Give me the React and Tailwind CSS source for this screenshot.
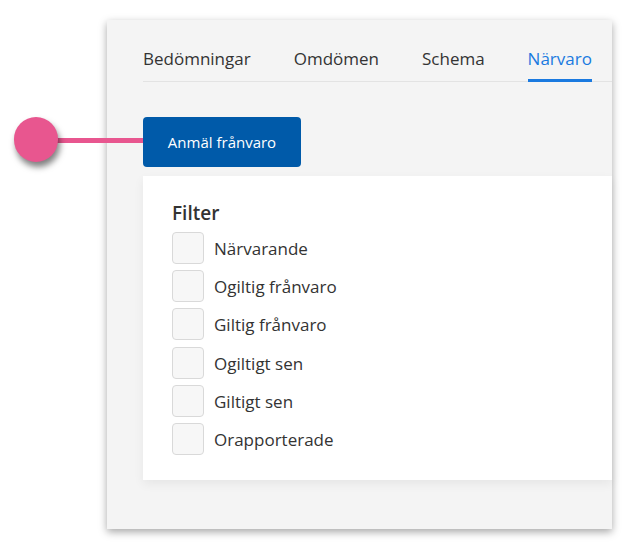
import React from "react";

const filters = [
  "Närvarande",
  "Ogiltig frånvaro",
  "Giltig frånvaro",
  "Ogiltigt sen",
  "Giltigt sen",
  "Orapporterade",
];

const tabs = ["Bedömningar", "Omdömen", "Schema", "Närvaro"];

export default function App() {
  return (
    <div
      className="relative w-[633px] h-[546px] bg-white overflow-hidden"
      style={{ fontFamily: '"Open Sans", "Noto Sans", sans-serif' }}
    >
      <div className="ml-[107px] mt-[20px] w-[505px] h-[509px] bg-[#f4f4f4] shadow-[0_3px_8px_rgba(0,0,0,0.35)] pl-[36px] pt-[27px] flex flex-col">
        <div className="flex gap-[43px] border-b border-[#e3e3e3]">
          {tabs.map((t, i) => (
            <div
              key={t}
              className={
                i === 3
                  ? "text-[17px] leading-[24px] pb-[8px] -mb-px border-b-[3px] border-[#1a7ae0] text-[#1a7ae0]"
                  : "text-[17px] leading-[24px] pb-[8px] text-[#333333]"
              }
            >
              {t}
            </div>
          ))}
        </div>
        <button className="mt-[35px] w-[158px] h-[50px] rounded-[4px] bg-[#005aa9] text-white text-[15px] flex items-center justify-center">
          Anmäl frånvaro
        </button>
        <div className="mt-[9px] h-[304px] bg-white shadow-[0_4px_10px_rgba(0,0,0,0.06)] pl-[29px] pt-[25px]">
          <div className="text-[19px] leading-[24px] font-semibold text-[#333333]">Filter</div>
          <div className="mt-[7px] flex flex-col gap-[6.2px]">
            {filters.map((f) => (
              <label key={f} className="flex items-center gap-[10px] h-[32px]">
                <span className="w-[32px] h-[32px] rounded-[4px] border border-[#d9d9d9] bg-[#f7f7f7]" />
                <span className="text-[17px] leading-[24px] text-[#333333] pt-[2px]">{f}</span>
              </label>
            ))}
          </div>
        </div>
      </div>

      <div className="absolute left-[50px] top-[138px] w-[93px] h-[5px] bg-[#e8568f]" />
      <div className="absolute left-[14px] top-[117px] w-[44px] h-[45px] rounded-full bg-[#e8568f] shadow-[2px_5px_6px_rgba(0,0,0,0.5)]" />
    </div>
  );
}
